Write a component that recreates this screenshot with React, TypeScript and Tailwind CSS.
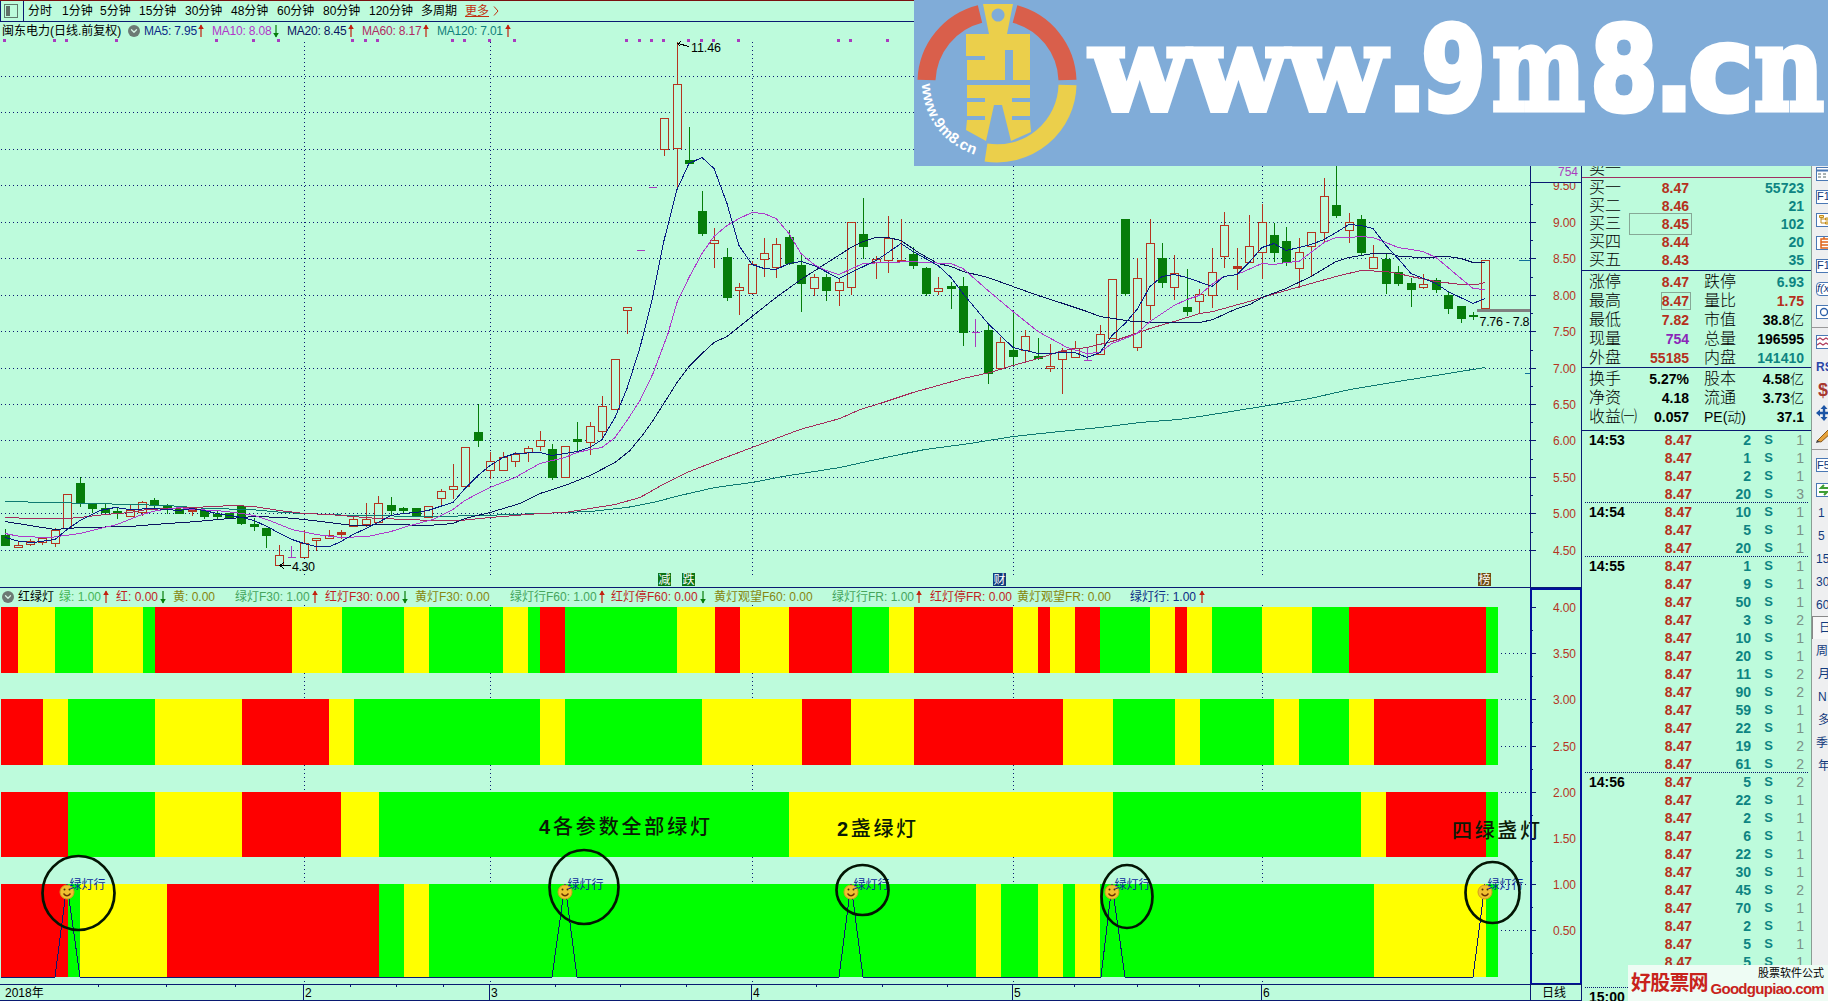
import { ReactNode } from 'react'
import clsx from 'clsx'
import { ChevronDown } from 'lucide-react'

type Kind = 'up' | 'down' | 'flat' | 'thin'
type Candle = [Kind, number, number, number, number]

const NAVY = '#0a1a72'
const RED = '#b5341f'
const GREEN = '#067d0a'
const PURPLE = '#a93bbf'
const BG = '#bdfbdc'

const periods = [
    ['分时', 'w-[34px]'],
    ['1分钟', 'w-[38px]'],
    ['5分钟', 'w-[39px]'],
    ['15分钟', 'w-[46px]'],
    ['30分钟', 'w-[46px]'],
    ['48分钟', 'w-[46px]'],
    ['60分钟', 'w-[46px]'],
    ['80分钟', 'w-[46px]'],
    ['120分钟', 'w-[52px]'],
    ['多周期', 'w-[44px]'],
]

const averages = [
    { text: 'MA5: 7.95', cls: 'w-[54px] text-[#0b2a86]', dir: 'up', gap: 'mr-2' },
    { text: 'MA10: 8.08', cls: 'w-[61px] text-[#b136c9]', dir: 'down', gap: 'mr-2' },
    { text: 'MA20: 8.45', cls: 'w-[61px] text-[#0a1560]', dir: 'up', gap: 'mr-2' },
    { text: 'MA60: 8.17', cls: 'w-[61px] text-[#b02a62]', dir: 'up', gap: 'mr-2' },
    { text: 'MA120: 7.01', cls: 'w-[68px] text-[#0f8079]', dir: 'up', gap: '' },
]

const lights = [
    { text: '红绿灯', cls: 'w-[41px] text-black', dir: '' },
    { text: '绿: 1.00', cls: 'w-[44px] text-[#45b556]', dir: 'up', gap: 'w-[13px]' },
    { text: '红: 0.00', cls: 'w-[44px] text-[#c01f1f]', dir: 'down', gap: 'w-[13px]' },
    { text: '黄: 0.00', cls: 'w-[62px] text-[#86860f]', dir: '' },
    { text: '绿灯F30: 1.00', cls: 'w-[77px] text-[#45a55c]', dir: 'up', gap: 'w-[13px]' },
    { text: '红灯F30: 0.00', cls: 'w-[77px] text-[#c01f1f]', dir: 'down', gap: 'w-[13px]' },
    { text: '黄灯F30: 0.00', cls: 'w-[95px] text-[#86860f]', dir: '' },
    { text: '绿灯行F60: 1.00', cls: 'w-[89px] text-[#45a55c]', dir: 'up', gap: 'w-[12px]' },
    { text: '红灯停F60: 0.00', cls: 'w-[89px] text-[#c01f1f]', dir: 'down', gap: 'w-[14px]' },
    { text: '黄灯观望F60: 0.00', cls: 'w-[118px] text-[#86860f]', dir: '' },
    { text: '绿灯行FR: 1.00', cls: 'w-[84px] text-[#45a55c]', dir: 'up', gap: 'w-[14px]' },
    { text: '红灯停FR: 0.00', cls: 'w-[87px] text-[#c01f1f]', dir: '' },
    { text: '黄灯观望FR: 0.00', cls: 'w-[113px] text-[#86860f]', dir: '' },
    { text: '绿灯行: 1.00', cls: 'w-[69px] text-[#0b2a86]', dir: 'up', gap: 'w-[13px]' },
]

// kind, high, body top, body bottom, low
const candles: Candle[] = [
    ['down', 529, 535, 545, 545], ['up', 541, 545, 547, 547], ['up', 539, 541, 544, 545],
    ['up', 537, 538, 542, 544], ['up', 528, 530, 543, 546], ['up', 494, 494, 528, 528],
    ['down', 477, 483, 503, 506], ['down', 504, 504, 508, 512], ['down', 504, 508, 512, 512],
    ['down', 508, 511, 513, 518], ['up', 505, 510, 516, 516], ['up', 501, 502, 512, 515],
    ['down', 498, 500, 504, 508], ['down', 504, 505, 509, 513], ['down', 509, 509, 513, 513],
    ['thin', 508, 508, 511, 515], ['down', 510, 510, 516, 518], ['down', 510, 514, 516, 518],
    ['down', 513, 513, 517, 517], ['down', 505, 506, 523, 524], ['down', 518, 524, 526, 530],
    ['down', 528, 528, 535, 547], ['up', 545, 555, 565, 565], ['flat', 546, 557, 557, 557],
    ['up', 530, 543, 557, 557], ['up', 538, 538, 540, 550], ['up', 530, 535, 538, 538],
    ['thin', 530, 532, 534, 538], ['up', 516, 519, 526, 526], ['up', 503, 519, 524, 526],
    ['up', 496, 503, 522, 522], ['down', 497, 505, 510, 514], ['down', 507, 508, 510, 512],
    ['down', 508, 508, 515, 515], ['up', 506, 506, 517, 517], ['up', 489, 491, 498, 505],
    ['up', 464, 486, 489, 498], ['up', 447, 447, 486, 486], ['down', 404, 432, 440, 446],
    ['up', 452, 461, 470, 478], ['up', 452, 457, 470, 470], ['up', 452, 454, 461, 466],
    ['up', 446, 448, 452, 461], ['up', 431, 440, 446, 450], ['down', 444, 449, 477, 479],
    ['up', 446, 446, 477, 477], ['down', 422, 439, 441, 451], ['up', 422, 426, 442, 454],
    ['up', 396, 406, 431, 438], ['up', 359, 359, 409, 409], ['up', 307, 307, 310, 333],
    ['flat', 250, 250, 250, 250], ['flat', 187, 187, 187, 187], ['up', 118, 118, 149, 155],
    ['up', 42, 84, 148, 187], ['down', 127, 160, 163, 163], ['down', 191, 211, 233, 235],
    ['up', 228, 240, 243, 267], ['down', 248, 257, 297, 300], ['up', 283, 287, 290, 314],
    ['up', 261, 264, 293, 293], ['up', 238, 253, 259, 276], ['up', 238, 244, 267, 277],
    ['down', 230, 237, 263, 264], ['down', 253, 265, 283, 311], ['up', 274, 277, 288, 295],
    ['down', 274, 277, 290, 300], ['up', 278, 282, 290, 305], ['up', 222, 222, 287, 294],
    ['down', 198, 234, 246, 258], ['up', 256, 259, 262, 278], ['up', 216, 238, 260, 272],
    ['thin', 219, 260, 260, 261], ['down', 247, 254, 265, 268], ['down', 267, 268, 293, 295],
    ['up', 277, 288, 291, 294], ['down', 282, 286, 288, 308], ['down', 277, 286, 332, 345],
    ['flat', 319, 332, 332, 346], ['down', 323, 330, 373, 383], ['up', 337, 342, 368, 368],
    ['down', 311, 350, 356, 365], ['up', 330, 336, 350, 360], ['down', 338, 356, 358, 359],
    ['up', 344, 366, 368, 371], ['up', 348, 351, 359, 393], ['up', 341, 348, 357, 357],
    ['flat', 347, 360, 360, 360], ['up', 325, 334, 354, 354], ['up', 279, 279, 338, 338],
    ['down', 219, 219, 293, 295], ['up', 258, 278, 347, 350], ['up', 219, 243, 305, 319],
    ['down', 243, 258, 282, 287], ['up', 255, 273, 287, 299], ['down', 269, 307, 311, 315],
    ['up', 289, 294, 301, 313], ['up', 248, 272, 295, 307], ['up', 212, 225, 256, 267],
    ['thin', 248, 266, 268, 289], ['up', 215, 246, 262, 262], ['up', 204, 222, 252, 278],
    ['down', 223, 235, 252, 261], ['down', 227, 241, 262, 265], ['up', 238, 252, 268, 287],
    ['up', 232, 232, 246, 275], ['up', 178, 196, 232, 242], ['down', 150, 205, 215, 217],
    ['up', 213, 222, 230, 242], ['down', 215, 219, 252, 254], ['up', 245, 257, 268, 268],
    ['down', 253, 259, 283, 293], ['down', 266, 272, 283, 285], ['down', 278, 283, 289, 306],
    ['up', 274, 284, 287, 288], ['down', 278, 280, 289, 292], ['down', 292, 295, 308, 313],
    ['down', 306, 306, 318, 322], ['down', 312, 315, 316, 319], ['up', 260, 260, 308, 308],
]

const maLines = [
    {
        color: '#0f7a72',
        points: '5,501 50,502 93,503 167,505 207,508 250,509 283,512 304,513 353,515 433,516 483,515 540,513 590,511 627,507 653,502 680,495 715,487 752,482 783,476 840,467 867,461 900,454 925,449 970,443 1013,436 1060,431 1100,427 1140,422 1178,419 1200,416 1262,406 1310,398 1350,389 1398,381 1448,373 1485,367',
    },
    {
        color: '#a52c5c',
        points: '5,517 33,518 67,518 80,517 105,514 130,512 147,509 193,507 233,505 254,506 279,510 304,513 329,514 353,516 378,518 410,519 430,520 460,520 490,517 540,513 565,512 590,508 615,504 640,497 663,484 687,472 715,461 752,447 800,429 840,418 860,409 880,403 913,392 963,378 990,372 1013,365 1038,358 1063,350 1087,347 1112,341 1133,334 1150,328 1174,321 1200,313 1213,311 1249,301 1262,297 1286,290 1311,283 1336,276 1361,270 1386,271 1398,273 1411,276 1436,281 1461,284 1477,284 1485,282',
    },
    {
        color: '#0a1560',
        points: '5,521 30,525 55,529 80,527 130,526 154,524 197,521 230,518 254,516 283,517 304,519 329,522 353,525 391,524 428,525 453,523 465,518 490,512 520,503 540,493 565,485 590,475 615,462 630,450 643,434 653,420 667,398 677,382 689,366 702,353 714,342 727,336 752,316 776,297 801,279 826,263 851,247 863,241 876,237 888,237 901,240 920,253 938,263 951,266 963,271 988,277 1013,286 1038,295 1063,303 1087,311 1100,316 1133,321 1157,322 1200,322 1213,319 1237,308 1250,304 1262,297 1286,288 1311,276 1336,261 1349,257 1373,253 1390,253 1400,256 1423,257 1448,256 1461,258 1473,262 1485,262',
    },
    {
        color: '#ae3bcb',
        points: '5,533 20,536 50,537 80,533 100,528 117,524 142,514 157,510 180,507 192,509 217,510 242,513 254,515 267,519 292,529 316,534 341,537 368,536 391,531 410,525 433,519 453,509 465,500 478,493 490,487 515,477 540,463 565,457 577,452 590,449 602,447 615,437 627,420 640,400 653,373 668,333 677,302 689,277 702,253 714,236 727,225 739,218 752,212 764,213 776,218 789,233 801,253 814,264 826,270 839,274 863,263 913,261 923,262 951,263 963,268 988,290 1013,311 1038,331 1067,347 1087,353 1100,352 1112,343 1125,338 1137,333 1150,321 1162,313 1174,305 1187,299 1199,295 1213,283 1224,276 1237,274 1262,263 1274,264 1286,262 1299,261 1311,252 1324,242 1336,237 1349,237 1361,236 1373,237 1386,242 1398,247 1411,249 1423,251 1436,257 1448,267 1461,278 1473,288 1485,289',
    },
    {
        color: '#0b1c84',
        points: '5,537 20,541 33,542 55,539 67,529 80,520 100,510 115,507 130,509 154,508 179,510 192,508 204,510 217,513 242,517 254,520 267,526 280,533 292,539 304,543 316,546 330,546 341,541 353,534 366,528 378,522 391,515 403,513 416,512 428,510 443,505 453,502 465,488 478,475 490,465 503,457 515,453 540,452 552,455 565,453 577,451 590,447 602,439 615,417 627,388 640,347 652,300 664,240 677,189 689,163 702,157 714,168 727,203 739,245 752,264 764,268 776,269 789,263 801,261 814,265 839,278 851,272 876,260 888,252 901,243 913,251 938,265 951,277 963,293 988,323 1013,347 1038,353 1075,352 1087,357 1100,352 1112,335 1125,323 1137,309 1150,286 1162,276 1174,274 1187,277 1212,286 1224,276 1237,274 1249,262 1262,247 1274,243 1286,250 1299,247 1311,244 1324,239 1336,232 1349,224 1361,225 1373,228 1386,245 1398,258 1411,273 1436,283 1448,291 1473,303 1485,298',
    },
]

const gridY = [76, 112, 149, 185, 222, 258, 295, 331, 368, 404, 440, 477, 513, 550]
const monthX = [304, 490, 752, 1013, 1262]
const markX = [
    4, 54, 66, 116, 216, 253, 278, 352, 365, 377, 452, 464, 489, 514,
    626, 639, 651, 663, 688, 701, 713, 738, 838, 850, 887,
]

const bands = [
    {
        y: 607, h: 66,
        runs: 'R18 Y55 G93 Y143 G155 R292 Y342 G404 Y429 G503 Y528 G540 R565 G677 Y715 R740 Y789 R852 G889 Y914 R1013 Y1038 R1050 Y1075 R1100 G1150 Y1175 R1187 Y1212 G1262 Y1312 G1349 R1486 G1498',
    },
    {
        y: 699, h: 66,
        runs: 'R43 Y68 G155 Y242 R329 Y354 G540 Y565 G702 Y802 R851 Y914 R1063 Y1113 G1175 Y1200 G1274 Y1299 G1349 Y1374 R1486 G1498',
    },
    { y: 792, h: 65, runs: 'R68 G155 Y242 R341 Y379 G789 Y1113 G1361 Y1386 R1486 G1498' },
    {
        y: 884, h: 93,
        runs: 'R68 G80 Y167 R379 G404 Y429 G976 Y1001 G1038 Y1063 G1075 Y1100 G1374 Y1486 G1498',
    },
]
const bandColor: Record<string, string> = { R: '#fe0000', Y: '#ffff00', G: '#00ff00' }

const signals = [67, 565, 851, 1112, 1485]
const rings = [
    [78.5, 893, 36, 37], [584, 887, 34.5, 37], [862.5, 890, 26, 25], [1127, 896.5, 25.5, 31.5], [1492.5, 892.5, 27, 30.5],
]

const bids = [
    ['买一', '8.47', '55723'],
    ['买二', '8.46', '21'],
    ['买三', '8.45', '102'],
    ['买四', '8.44', '20'],
    ['买五', '8.43', '35'],
]

const stats = [
    ['涨停', '8.47', 'text-[#b5301c]', '跌停', '6.93', 'text-[#0d8482]'],
    ['最高', '8.47', 'text-[#b5301c]', '量比', '1.75', 'text-[#b5301c]'],
    ['最低', '7.82', 'text-[#b5301c]', '市值', '38.8亿', 'text-black'],
    ['现量', '754', 'text-[#8a25b8]', '总量', '196595', 'text-black'],
    ['外盘', '55185', 'text-[#b5301c]', '内盘', '141410', 'text-[#0d8482]'],
]

const stats2 = [
    ['换手', '5.27%', 'text-black', '股本', '4.58亿', 'text-black'],
    ['净资', '4.18', 'text-black', '流通', '3.73亿', 'text-black'],
    ['收益㈠', '0.057', 'text-black', 'PE(动)', '37.1', 'text-black'],
]

const ticks = [
    { time: '14:53', rows: [[2, 1], [1, 1], [2, 1], [20, 3]] },
    { time: '14:54', rows: [[10, 1], [5, 1], [20, 1]] },
    { time: '14:55', rows: [[1, 1], [9, 1], [50, 1], [3, 2], [10, 1], [20, 1], [11, 2], [90, 2], [59, 1], [22, 1], [19, 2], [61, 2]] },
    { time: '14:56', rows: [[5, 2], [22, 1], [2, 1], [6, 1], [22, 1], [30, 1], [45, 2], [70, 1], [2, 1], [5, 1], [5, 1]] },
]

function Arrow({ dir }: { dir: string }) {
    const color = dir === 'up' ? '#c3200f' : '#067d0a'
    return (
        <svg width="6" height="14" viewBox="0 0 6 14" className={clsx('shrink-0', dir === 'down' && 'rotate-180')}>
            <path d="M3 1v12" stroke={color} strokeWidth="1.2" />
            <path d="M3 0.5L5.8 5H0.2z" fill={color} />
        </svg>
    )
}

function Toggle() {
    return (
        <span className="flex h-3 w-3 shrink-0 items-center justify-center rounded-full bg-[#6c7a74]">
            <ChevronDown className="h-2.5 w-2.5 text-[#d8f5e6]" strokeWidth={3} />
        </span>
    )
}

function CandleMark({ x, data }: { x: number; data: Candle }) {
    const [kind, high, top, bottom, low] = data
    const color = kind === 'down' ? GREEN : kind === 'flat' ? PURPLE : RED
    return (
        <g stroke={color} fill={kind === 'up' ? BG : color}>
            {high !== low && <path d={`M${x + 0.5} ${high}V${low + 1}`} />}
            {kind === 'flat' ? (
                <path d={`M${x - 3} ${top + 0.5}h8`} />
            ) : (
                <rect x={x - 3.5} y={top + 0.5} width="8" height={Math.max(bottom - top, 0.5)} />
            )}
        </g>
    )
}

function PriceChart() {
    return (
        <svg width="1530" height="548" viewBox="0 39 1530 548" className="block" shapeRendering="crispEdges">
            <g stroke={NAVY} strokeDasharray="1 3">
                {gridY.map((y) => <path key={y} d={`M1 ${y + 0.5}H1530`} />)}
                {monthX.map((x) => <path key={x} d={`M${x + 0.5} 42V576`} />)}
            </g>
            {markX.map((x) => <rect key={x} x={x - 1} y="39" width="3" height="3" fill={PURPLE} />)}
            {candles.map((c, i) => <CandleMark key={i} x={Math.floor(5.6 + 12.44 * i)} data={c} />)}
            {maLines.map((l) => (
                <polyline key={l.color} points={l.points} transform="translate(0 0.5)" fill="none" stroke={l.color} />
            ))}
            <g fill="none" stroke="#000">
                <path d="M689 46.5L678 43.5M681 41.5L678 43.5L680 46" />
                <path d="M291 565.5H280M284 562L280 565.5L284 569" />
            </g>
            <rect x="1477" y="309" width="53" height="3" fill="#808080" />
            <path d="M1519 260.5h11M1525 373.5h5" stroke="#0f6f9a" />
            <g fontSize="12.5">
                <text x="691" y="52" textLength="30">11.46</text>
                <text x="292" y="571" textLength="23">4.30</text>
                <text x="1479.5" y="326" textLength="50">7.76 - 7.8</text>
            </g>
            {[
                [658, '减', '#0b7416'],
                [682, '跌', '#0b7416'],
                [993, '财', '#123a7c'],
                [1478, '榜', '#6d4a12'],
            ].map(([x, label, fill]) => (
                <g key={label}>
                    <rect x={x} y="573" width="13" height="13" fill={fill as string} />
                    <text x={Number(x) + 0.5} y="584" fontSize="12" fill="#fff">{label}</text>
                </g>
            ))}
        </svg>
    )
}

function PriceAxis() {
    return (
        <svg width="52" height="565" viewBox="1530 22 52 565" className="block" shapeRendering="crispEdges">
            <g stroke={NAVY} fill="none">
                {gridY.slice(4).map((y) => (
                    <path key={y} d={`M1531 ${y + 0.5}h5M1531 ${y - 17.5}h2`} />
                ))}
            </g>
            <g fontSize="12" fill={RED} textAnchor="end">
                {gridY.slice(3).map((y, i) => (
                    <text key={y} x="1576" y={y + 5} textLength="23">{(9.5 - i * 0.5).toFixed(2)}</text>
                ))}
            </g>
            <rect x="1532" y="167" width="49" height="15" fill={BG} />
            <path d="M1530.5 22V587M1581.5 22V587M1530 182.5H1582" stroke={NAVY} />
            <text x="1578" y="176" fontSize="12" fill={PURPLE} textAnchor="end">754</text>
        </svg>
    )
}

function Smiley({ x }: { x: number }) {
    return (
        <g transform={`translate(${x} 892)`}>
            <circle r="7" fill="#f0c030" stroke="#d39c20" />
            <circle cx="-2.5" cy="-2.5" r="1" fill="#4a2a00" />
            <circle cx="2.5" cy="-2.5" r="1" fill="#4a2a00" />
            <path d="M-3.5 1.5Q0 6 3.5 1.5" fill="none" stroke="#6b3000" strokeWidth="1.3" />
        </g>
    )
}

function LightChart() {
    return (
        <svg width="1530" height="380" viewBox="0 605 1530 380" className="block overflow-visible">
            <g shapeRendering="crispEdges">
                <g stroke={NAVY} strokeDasharray="1 3">
                    {monthX.map((x) => <path key={x} d={`M${x + 0.5} 605V984`} />)}
                    {[653, 699, 746, 792, 884, 930].map((y) => <path key={y} d={`M1501 ${y + 0.5}H1528`} />)}
                </g>
                {bands.map((band) => {
                    let x = 1
                    return band.runs.split(' ').map((run) => {
                        const from = x
                        x = Number(run.slice(1))
                        return (
                            <rect key={`${band.y}-${run}`} x={from} y={band.y} width={x - from} height={band.h} fill={bandColor[run[0]]} />
                        )
                    })
                })}
                <polyline
                    points="1,977 55,977 67,884 80,977 552,977 565,884 577,977 839,977 851,884 863,977 1101,977 1112,884 1125,977 1473,977 1485,884"
                    fill="none"
                    stroke={NAVY}
                />
            </g>
            {signals.map((x) => (
                <g key={x}>
                    <Smiley x={x} />
                    <text x={x + 2.5} y="889" fontSize="12" fill="#0b2a9a">绿灯行</text>
                </g>
            ))}
            {rings.map(([cx, cy, rx, ry]) => (
                <ellipse key={cx} cx={cx} cy={cy} rx={rx} ry={ry} fill="none" stroke="#031503" strokeWidth="2.7" />
            ))}
            <g fill="#0a1a06" fontSize="20" fontWeight="500">
                <text x="539" y="834" textLength="171"><tspan fontWeight="700">4</tspan>各参数全部绿灯</text>
                <text x="837" y="836" textLength="79"><tspan fontWeight="700">2</tspan>盏绿灯</text>
                <text x="1452" y="838" textLength="88">四绿盏灯</text>
            </g>
        </svg>
    )
}

function LightAxis() {
    const ys = [607, 653, 699, 746, 792, 838, 884, 930]
    return (
        <svg width="52" height="397" viewBox="1530 588 52 397" className="block" shapeRendering="crispEdges">
            <rect x="1531" y="589" width="50" height="395" fill="none" stroke="#00109a" strokeWidth="2" />
            <g stroke={NAVY}>
                {ys.map((y) => <path key={y} d={`M1531 ${y + 0.5}h5M1531 ${y + 23.5}h2`} />)}
            </g>
            <g fontSize="12" fill={RED} textAnchor="end">
                {ys.map((y, i) => (
                    <text key={y} x="1576" y={y + 5} textLength="23">{(4 - i * 0.5).toFixed(2)}</text>
                ))}
            </g>
        </svg>
    )
}

function TimeAxis() {
    const minor = [98, 166, 235, 350, 396, 443, 555, 620, 686, 816, 882, 947, 1074, 1137, 1199]
    return (
        <svg width="1582" height="17" viewBox="0 984 1582 17" className="block" shapeRendering="crispEdges">
            <g stroke={NAVY} fill="none">
                <path d="M0 984.5H1582M0 1000.5H1582M1530.5 984V1001M1581.5 984V1001" />
                {monthX.map((x) => <path key={x} d={`M${x - 0.5} 984V1001`} />)}
                {minor.map((x) => <path key={x} d={`M${x + 0.5} 985v2`} />)}
            </g>
            <g fontSize="12">
                <text x="5" y="997">2018年</text>
                {monthX.map((x, i) => <text key={x} x={x + 1} y="997">{i + 2}</text>)}
                <text x="1542" y="997">日线</text>
            </g>
        </svg>
    )
}

function Num({ value, className }: { value: string; className?: string }) {
    const unit = value.endsWith('亿')
    return (
        <span className={clsx('text-right text-sm font-bold', className)}>
            {unit ? value.slice(0, -1) : value}
            {unit && <span className="font-light">亿</span>}
        </span>
    )
}

function StatRow({ row, boxed }: { row: string[]; boxed?: boolean }) {
    return (
        <div className="flex h-[19px] items-center">
            <span className="w-[50px] text-base font-light whitespace-nowrap">{row[0]}</span>
            <span className="flex w-[50px] justify-end">
                <Num
                    value={row[1]}
                    className={clsx(row[2], boxed && '-mr-0.5 border border-[#86a896] pr-px leading-4')}
                />
            </span>
            <span className="ml-[15px] w-[40px] text-base font-light whitespace-nowrap">
                {row[3].startsWith('PE') ? <><b className="text-sm font-medium">PE</b><span className="text-sm">(动)</span></> : row[3]}
            </span>
            <Num value={row[4]} className={clsx(row[5], 'flex-1')} />
        </div>
    )
}

function TickRow({ time, price, vol, side, count, volClass }: {
    time?: string
    price: string
    vol: string
    side: string
    count: string
    volClass?: string
}) {
    return (
        <div className="flex h-[18px] items-center text-sm font-bold">
            <span className="w-[50px]">{time}</span>
            <span className="w-[53px] text-right text-[#b5301c]">{price}</span>
            <span className={clsx('w-[59px] text-right', volClass ?? 'text-[#0d8482]')}>{vol}</span>
            <span className="w-[22px] text-right text-[13px] text-[#0d8482]">{side}</span>
            <span className="w-[31px] text-right font-normal text-[#7b9187]">{count}</span>
        </div>
    )
}

function QuotePanel() {
    return (
        <aside className="flex w-[230px] shrink-0 flex-col overflow-hidden border-r border-[#8a9d94]">
            <div className="flex h-[178px] shrink-0 items-end border-b border-[#a02f62] pl-[7px]">
                <span className="text-base leading-[17px] font-light">卖一</span>
            </div>
            <div className="h-[93px] shrink-0 border-b border-[#0a1a72] pt-px pr-[7px] pl-[7px]">
                {bids.map((row, i) => (
                    <div key={row[0]} className="flex h-[18px] items-center">
                        <span className="w-[40px] text-base font-light">{row[0]}</span>
                        <span
                            className={clsx(
                                'flex w-[63px] justify-end border pr-[2px] leading-4',
                                i === 2 ? 'border-[#86a896]' : 'border-transparent',
                            )}
                        >
                            <Num value={row[1]} className="text-[#b5301c]" />
                        </span>
                        <Num value={row[2]} className="flex-1 text-[#0d8482]" />
                    </div>
                ))}
            </div>
            <div className="h-[97px] shrink-0 border-b border-[#0a1a72] pt-px pr-[7px] pl-[7px]">
                {stats.map((row, i) => <StatRow key={row[0]} row={row} boxed={i === 1} />)}
            </div>
            <div className="h-[63px] shrink-0 border-b border-[#0a1a72] pt-px pr-[7px] pl-[7px]">
                {stats2.map((row) => <StatRow key={row[0]} row={row} />)}
            </div>
            <div className="shrink-0 pr-[7px] pl-[7px]">
                {ticks.map((group, g) => (
                    <div
                        key={group.time}
                        className={clsx(g > 0 && '-mx-1 -mt-px border-t border-dotted border-[#0a1a72] px-1')}
                    >
                        {group.rows.map(([vol, count], i) => (
                            <TickRow key={i} time={i === 0 ? group.time : ''} price="8.47" vol={`${vol}`} side="S" count={`${count}`} />
                        ))}
                    </div>
                ))}
                <div className="-mx-1 mt-4 border-t border-dotted border-[#0a1a72] px-1">
                    <TickRow time="15:00" price="8.47" vol="748" side="" count="91" volClass="text-[#8a25b8]" />
                </div>
            </div>
        </aside>
    )
}

function Boxed({ children, className }: { children: ReactNode; className?: string }) {
    return (
        <span className={clsx('flex h-3.5 w-5 shrink-0 items-center overflow-hidden border border-[#4a78b4] bg-white', className)}>
            {children}
        </span>
    )
}

function SideTools() {
    const label = 'text-[11px] leading-none text-[#123a7c]'
    const cell = 'flex h-[23px] shrink-0 items-center'
    const labels = ['1', '5', '15', '30', '60', '日', '周', '月', 'N', '多', '季', '年']
    return (
        <nav className="flex w-[16px] shrink-0 flex-col overflow-hidden bg-[#eeeff0] pt-[162px] pl-1">
            <div className={cell}>
                <Boxed>
                    <svg width="14" height="12" viewBox="0 0 14 12" stroke="#566" fill="none">
                        <path d="M0 2.5h14" stroke="#4a78b4" strokeWidth="2" />
                        <path d="M1 6h3M6 6h3M11 6h3M1 9h3M6 9h3M11 9h3" />
                    </svg>
                </Boxed>
            </div>
            <div className={cell}><Boxed><span className={label}>F10</span></Boxed></div>
            <div className={cell}>
                <Boxed>
                    <svg width="14" height="12" viewBox="0 0 14 12" fill="#fbe08a" stroke="#c08a1c">
                        <path d="M4 3v6h4M4 5h4" fill="none" />
                        <path d="M2.5 1.5h4v2h-4zM8.5 4h5v2h-5zM8.5 8h5v2h-5z" />
                    </svg>
                </Boxed>
            </div>
            <div className={cell}>
                <Boxed>
                    <svg width="14" height="12" viewBox="0 0 14 12" fill="none" stroke="#e0641a" strokeWidth="1.5">
                        <path d="M7 0v2M4 2h8v9H4zM4 5h8M4 8h8" />
                    </svg>
                </Boxed>
            </div>
            <div className={cell}><Boxed><span className={label}>F12</span></Boxed></div>
            <div className={cell}><Boxed className="rounded-sm"><i className={label}>f(x)</i></Boxed></div>
            <div className={cell}>
                <Boxed>
                    <svg width="14" height="12" viewBox="0 0 14 12" fill="none" stroke="#2b5fa8" strokeWidth="1.3">
                        <circle cx="7" cy="6" r="3.5" />
                    </svg>
                </Boxed>
            </div>
            <div className="-ml-1 h-[5px] shrink-0 border-b border-[#999]" />
            <div className="flex h-[27px] shrink-0 items-center">
                <Boxed>
                    <svg width="14" height="12" viewBox="0 0 14 12" fill="none" strokeWidth="1.2">
                        <path d="M0 4l3-2 3 2 3-2 3 2 3-2" stroke="#b03a5a" />
                        <path d="M0 9l3-2 3 2 3-2 3 2 3-2" stroke="#b03a5a" />
                    </svg>
                </Boxed>
            </div>
            <div className={cell}><b className="text-xs text-[#2b46a8]">RSI</b></div>
            <div className={cell}><b className="pl-0.5 text-lg leading-none text-[#a8382f]">$</b></div>
            <div className={cell}>
                <svg width="16" height="16" viewBox="0 0 16 16" fill="#1d55a5" className="shrink-0">
                    <path d="M8 0l3.5 4H9.2v2.8H12V4.5L16 8l-4 3.5V9.2H9.2V12h2.3L8 16l-3.500-4h2.300V9.200H4v2.300L0 8l4-3.500v2.300h2.800V4H4.500z" />
                </svg>
            </div>
            <div className={cell}>
                <svg width="16" height="16" viewBox="0 0 16 16" className="shrink-0">
                    <path d="M1 13L12 2l3 3L5 14z" fill="#e6a23a" stroke="#8a5a1c" />
                    <path d="M0 15l1-3 3 2z" fill="#444" />
                </svg>
            </div>
            <div className="-ml-1 h-[3px] shrink-0 border-b border-[#999]" />
            <div className="flex h-[30px] shrink-0 items-center"><Boxed><span className={label}>F5</span></Boxed></div>
            <div className="mb-0.5 flex h-[19px] shrink-0 items-center">
                <Boxed>
                    <svg width="14" height="12" viewBox="0 0 14 12" fill="none" stroke="#3f9e34" strokeWidth="2">
                        <path d="M12 4H4l3-3M2 8h8L7 11" />
                    </svg>
                </Boxed>
            </div>
            {labels.map((text) => (
                <div
                    key={text}
                    className={clsx(
                        'flex h-[23px] shrink-0 items-center text-xs text-[#123a7c]',
                        text.length === 2 || /[周季]/.test(text) ? 'pl-0' : 'pl-0.5',
                        text === '日' && '-ml-1 border-t border-l border-[#888] bg-[#f8f8f8] !pl-1.5',
                    )}
                >
                    {text}
                </div>
            ))}
        </nav>
    )
}

function Banner() {
    return (
        <div className="absolute top-0 left-[914px] h-[166px] w-[914px] bg-[#80acd8]">
            <svg width="914" height="166" viewBox="914 0 914 166" className="block">
                <g fill="none" strokeWidth="18">
                    <path d="M926.500 80A70.500 71 0 0 1 980 14" stroke="#d95f4b" />
                    <path d="M1015 14A70.500 71 0 0 1 1067.500 80" stroke="#d95f4b" />
                    <path d="M1067.500 85A70.500 70 0 0 1 986 152.500" stroke="#ebcf4b" />
                </g>
                <g fill="#ebcf4b">
                    <path
                        fillRule="evenodd"
                        d="M983 4h30l-6 30h23v46h-17V50h-8v30H967V60h18v-4H966V34h23zM998 8.500a6.500 6.500 0 1 0 0.100 0z"
                    />
                    <path d="M967 85h63v13h-18v4h18v14h-18v4h18l1 12-20 9-9-36h-8l-8 36-20-11 1-10h18v-4h-18v-14h18v-4h-18z" />
                </g>
                <path id="rim" d="M922 84A75 75 0 0 0 985 157" fill="none" />
                <text fill="#fff" fontSize="15" fontWeight="700">
                    <textPath href="#rim" textLength="94">www.9m8.cn</textPath>
                </text>
                <g
                    fill="#fff"
                    stroke="#fff"
                    strokeWidth="5"
                    fontSize="118"
                    fontWeight="700"
                    fontFamily="'DejaVu Sans', sans-serif"
                >
                    <g fontFamily="'DejaVu Serif', serif" fontSize="117">
                        <text x="1090" y="110" textLength="296" lengthAdjust="spacingAndGlyphs">www</text>
                        <text x="1492" y="110" textLength="93" lengthAdjust="spacingAndGlyphs">m</text>
                        <text x="1754" y="110" textLength="70" lengthAdjust="spacingAndGlyphs">n</text>
                    </g>
                    <text x="1386" y="110" textLength="42" lengthAdjust="spacingAndGlyphs">.</text>
                    <text x="1421" y="110" textLength="65" lengthAdjust="spacingAndGlyphs">9</text>
                    <text x="1590" y="110" textLength="68" lengthAdjust="spacingAndGlyphs">8</text>
                    <text x="1654" y="110" textLength="40" lengthAdjust="spacingAndGlyphs">.</text>
                    <text x="1688" y="110" textLength="66" lengthAdjust="spacingAndGlyphs">c</text>
                </g>
            </svg>
        </div>
    )
}

export default function App() {
    return (
        <div className="relative flex h-[1001px] w-[1828px] overflow-hidden bg-[#bdfbdc] font-['Liberation_Sans','Noto_Sans_CJK_SC',sans-serif] text-black">
            <main className="flex w-[1582px] shrink-0 flex-col">
                <header className="flex h-[22px] shrink-0 items-center border-t border-b border-t-[#7a1010] border-b-[#0a1a72] text-xs whitespace-nowrap">
                    <div className="mr-1 flex h-full w-6 items-center border-r border-l border-[#0a1a72] pl-[3px]">
                        <div className="h-3.5 w-3.5 border border-[#5f7a6d] p-px">
                            <div className="h-full w-1 bg-[#5f6f68]" />
                        </div>
                    </div>
                    {periods.map(([text, width]) => (
                        <span key={text} className={width}>{text}</span>
                    ))}
                    <span className="text-[#c03010] underline">更多</span>
                    <svg width="6" height="10" viewBox="0 0 6 10" className="ml-1">
                        <path d="M1 0.500L5 5L1 9.500" fill="none" stroke="#c03010" />
                    </svg>
                </header>

                <section className="flex h-[565px] shrink-0">
                    <div className="w-[1530px]">
                        <div className="flex h-[17px] items-center pl-0.5 text-xs whitespace-nowrap">
                            <span className="w-[126px]">闽东电力(日线.前复权)</span>
                            <Toggle />
                            <div className="ml-1 flex items-center tracking-[-0.2px]">
                                {averages.map((ma) => (
                                    <span key={ma.text} className={clsx('flex items-center', ma.gap)}>
                                        <span className={ma.cls}>{ma.text}</span>
                                        <Arrow dir={ma.dir} />
                                    </span>
                                ))}
                            </div>
                        </div>
                        <PriceChart />
                    </div>
                    <PriceAxis />
                </section>

                <section className="flex h-[397px] shrink-0 border-t border-[#0a1a72]">
                    <div className="w-[1530px]">
                        <div className="flex h-[17px] items-center pl-0.5 text-xs whitespace-nowrap">
                            <Toggle />
                            <div className="ml-1 flex items-center">
                                {lights.map((l) => (
                                    <span key={l.text} className="flex items-center">
                                        <span className={l.cls}>{l.text}</span>
                                        {l.dir && <span className={l.gap}><Arrow dir={l.dir} /></span>}
                                    </span>
                                ))}
                            </div>
                        </div>
                        <LightChart />
                    </div>
                    <LightAxis />
                </section>
                <TimeAxis />
            </main>

            <QuotePanel />
            <SideTools />

            <Banner />

            <div className="absolute right-0 bottom-0 flex h-9 w-[200px] items-center bg-[#eefcf4] pl-[3px] whitespace-nowrap">
                <span className="w-20 text-xl font-bold tracking-[-0.8px] text-[#c8231c]">好股票网</span>
                <div className="flex w-[113px] flex-col items-end">
                    <span className="text-[11px] leading-3">股票软件公式</span>
                    <span className="text-[15px] leading-5 font-bold tracking-[-0.7px] text-[#c8231c]">Goodgupiao.com</span>
                </div>
            </div>
        </div>
    )
}
